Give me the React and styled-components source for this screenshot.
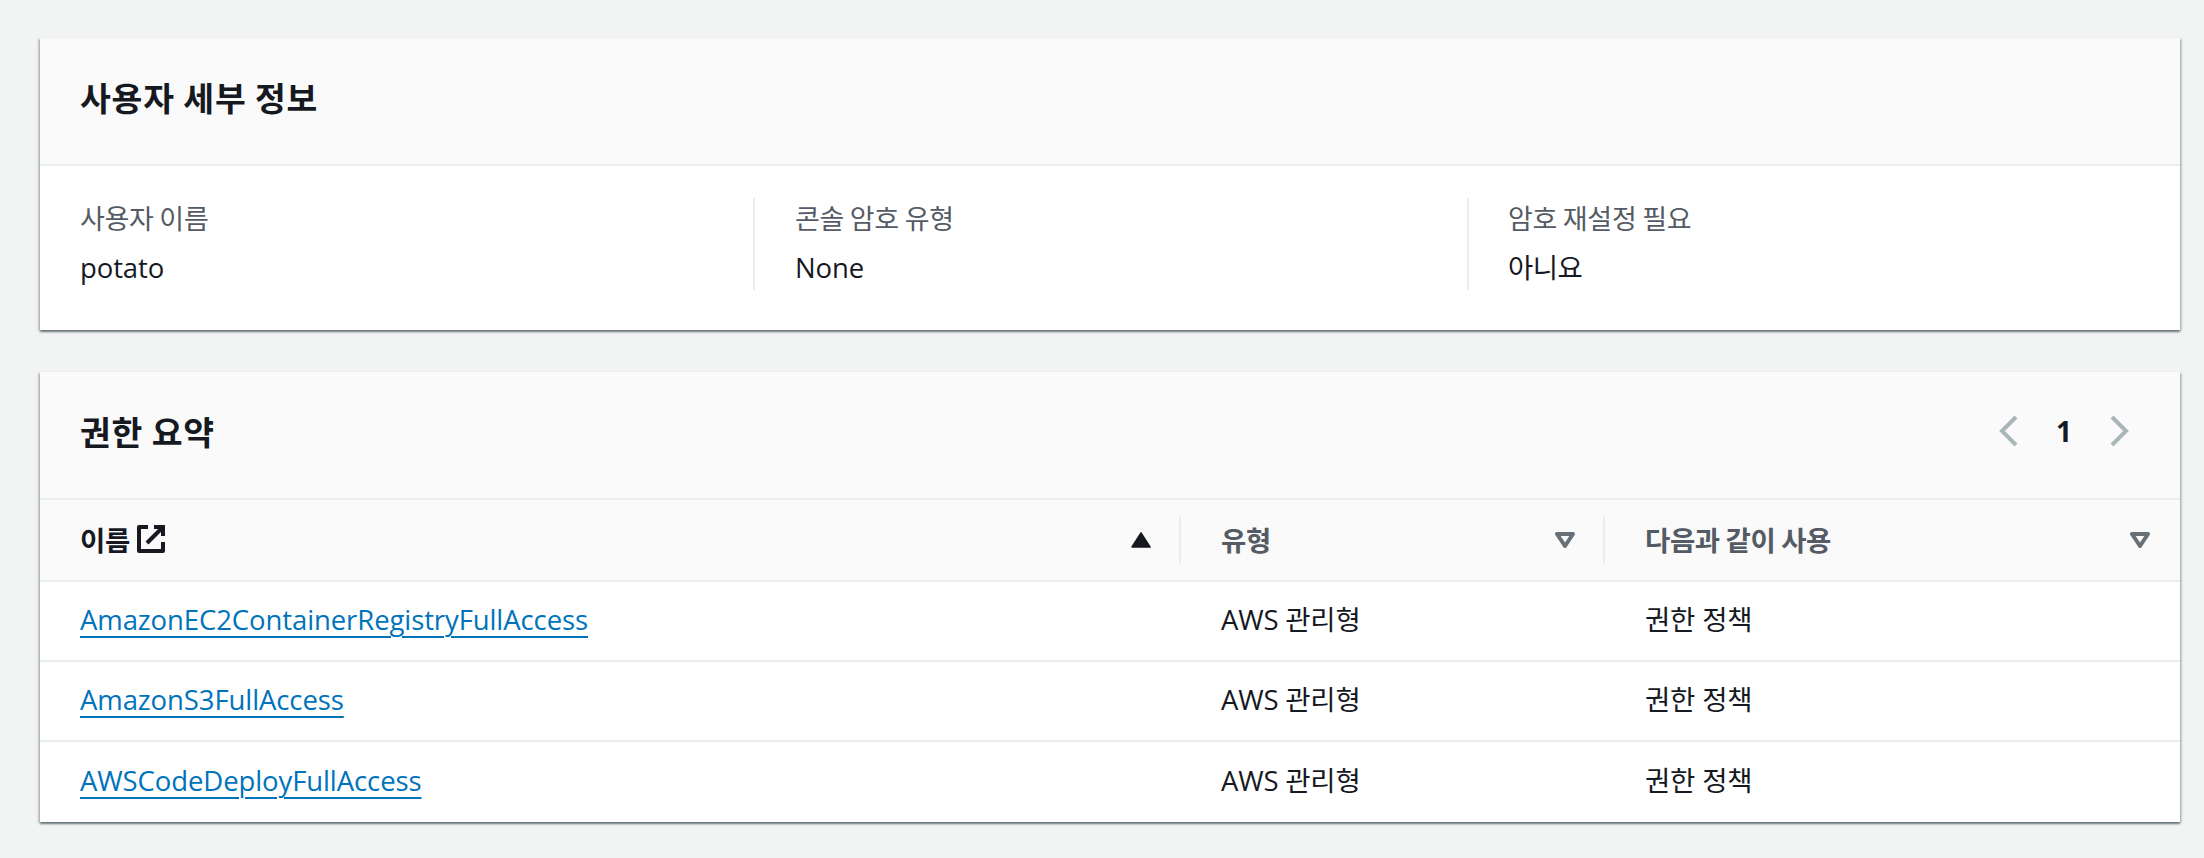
import React from 'react';
import styled, { createGlobalStyle } from 'styled-components';

const Global = createGlobalStyle`
  html, body { margin: 0; padding: 0; background: #f2f3f3; }
  body { font-family: "Open Sans", "Noto Sans CJK KR", sans-serif; color: #16191f; }
`;
const FONT = `"Open Sans", "Noto Sans CJK KR", sans-serif`;
const KR = `"Noto Sans CJK KR", sans-serif`;

const Page = styled.div`
  display: flex; flex-direction: column; gap: 42px;
  padding: 38px 24px 36px 40px;
  width: 2204px; height: 858px; box-sizing: border-box;
`;
const Card = styled.section`
  background: #fff;
  box-shadow: 0 2px 2px 0 rgba(0,28,36,.5), 2px 1px 2px 0 rgba(0,28,36,.15), -2px 1px 2px 0 rgba(0,28,36,.15);
`;
const CardHeader = styled.header`
  display: flex; align-items: center; justify-content: space-between;
  height: 128px; box-sizing: border-box; padding: 0 51px 8px 40px;
  background: #fafafa; border-bottom: 2px solid #eaeded;
`;
const Title = styled.h2`
  margin: 0; font: 700 33.5px/44px ${KR}; letter-spacing: 0.8px; color: #16191f;
`;
const Fields = styled.div`
  display: grid; grid-template-columns: 713px 714px 713px;
  padding: 32px 0 40px;
`;
const Field = styled.div`
  height: 92px; box-sizing: border-box; padding: 2px 0 0 ${p => (p.$first ? 40 : 39)}px;
  border-left: ${p => (p.$first ? 'none' : '2px solid #eaeded')};
  display: flex; flex-direction: column; gap: 14px;
`;
const Label = styled.div`
  font: 400 27px/36px ${KR}; letter-spacing: -0.3px; color: #545b64;
  margin-left: ${p => p.$nudge || 0}px;
`;
const Value = styled.div`
  font: 400 27.5px/36px ${FONT}; letter-spacing: ${p => (p.$korean ? -0.6 : -0.1)}px; color: #16191f;
  margin-left: ${p => p.$nudge || 0}px;
`;
const Pager = styled.div`
  display: flex; align-items: center; width: 130px; justify-content: space-between;
`;
const PageNum = styled.span`
  font: 700 28px/36px ${FONT}; color: #16191f;
`;
const Row = styled.div`
  display: grid; grid-template-columns: 1139px 424px 577px;
  height: ${p => p.$h}px; box-sizing: border-box; align-items: center;
  background: ${p => (p.$head ? '#fafafa' : '#fff')};
  border-bottom: ${p => (p.$last ? 'none' : '2px solid #eaeded')};
`;
const HeadCell = styled.div`
  display: flex; align-items: center; justify-content: space-between;
  height: 46px; box-sizing: border-box; padding: 0 ${p => (p.$end ? 30 : 28)}px 0 ${p => (p.$first ? 40 : 40)}px;
  border-left: ${p => (p.$first ? 'none' : '2px solid #eaeded')};
`;
const HeadLabel = styled.span`
  display: inline-flex; align-items: center; gap: 7px; margin-top: -2px;
  font: 700 27.5px/36px ${KR}; letter-spacing: -0.4px;
  color: ${p => (p.$active ? '#16191f' : '#545b64')};
`;
const Cell = styled.div`
  padding: 0 0 2px ${p => (p.$first ? 40 : 42)}px;
  font: 400 27.5px/36px ${FONT}; letter-spacing: -0.2px; color: #16191f;
`;
const PolicyLink = styled.a`
  font: 400 27.5px/36px ${FONT}; letter-spacing: -0.1px; color: #0073bb;
  text-decoration: underline; text-decoration-thickness: 2px; text-underline-offset: 6px;
`;

const Chevron = ({ dir }) => (
  <svg width="20" height="32" viewBox="0 0 20 32" fill="none">
    <path d={dir === 'left' ? 'M17 2 3 16l14 14' : 'M3 2l14 14L3 30'} stroke="#aab7b8" strokeWidth="4" />
  </svg>
);
const External = () => (
  <svg width="28" height="28" viewBox="0 0 28 28" fill="none" stroke="#16191f" strokeWidth="4">
    <path d="M11 2H2v24h24v-9" strokeLinejoin="round" />
    <path d="M17 2h9v9" />
    <path d="M26 2 10 18" />
  </svg>
);
const SortUp = () => (
  <svg width="20" height="16" viewBox="0 0 20 16"><path d="M10 1 19 15H1Z" fill="#16191f" stroke="#16191f" strokeWidth="1.5" strokeLinejoin="round" /></svg>
);
const SortDown = () => (
  <svg width="20" height="16" viewBox="0 0 20 16"><path d="M2 2H18L10 14Z" fill="none" stroke="#687078" strokeWidth="4" strokeLinejoin="round" /></svg>
);

const policies = ['AmazonEC2ContainerRegistryFullAccess', 'AmazonS3FullAccess', 'AWSCodeDeployFullAccess'];

export default function App() {
  return (
    <Page>
      <Global />
      <Card>
        <CardHeader><Title>사용자 세부 정보</Title></CardHeader>
        <Fields>
          <Field $first><Label>사용자 이름</Label><Value>potato</Value></Field>
          <Field><Label $nudge={1}>콘솔 암호 유형</Label><Value $nudge={1}>None</Value></Field>
          <Field><Label>암호 재설정 필요</Label><Value $korean>아니요</Value></Field>
        </Fields>
      </Card>
      <Card>
        <CardHeader>
          <Title>권한 요약</Title>
          <Pager><Chevron dir="left" /><PageNum>1</PageNum><Chevron dir="right" /></Pager>
        </CardHeader>
        <Row $head $h={82}>
          <HeadCell $first><HeadLabel $active>이름 <External /></HeadLabel><SortUp /></HeadCell>
          <HeadCell><HeadLabel>유형</HeadLabel><SortDown /></HeadCell>
          <HeadCell $end><HeadLabel>다음과 같이 사용</HeadLabel><SortDown /></HeadCell>
        </Row>
        {policies.map((p, i) => (
          <Row key={p} $h={80} $last={i === 2}>
            <Cell $first><PolicyLink href="#">{p}</PolicyLink></Cell>
            <Cell>AWS 관리형</Cell>
            <Cell>권한 정책</Cell>
          </Row>
        ))}
      </Card>
    </Page>
  );
}
